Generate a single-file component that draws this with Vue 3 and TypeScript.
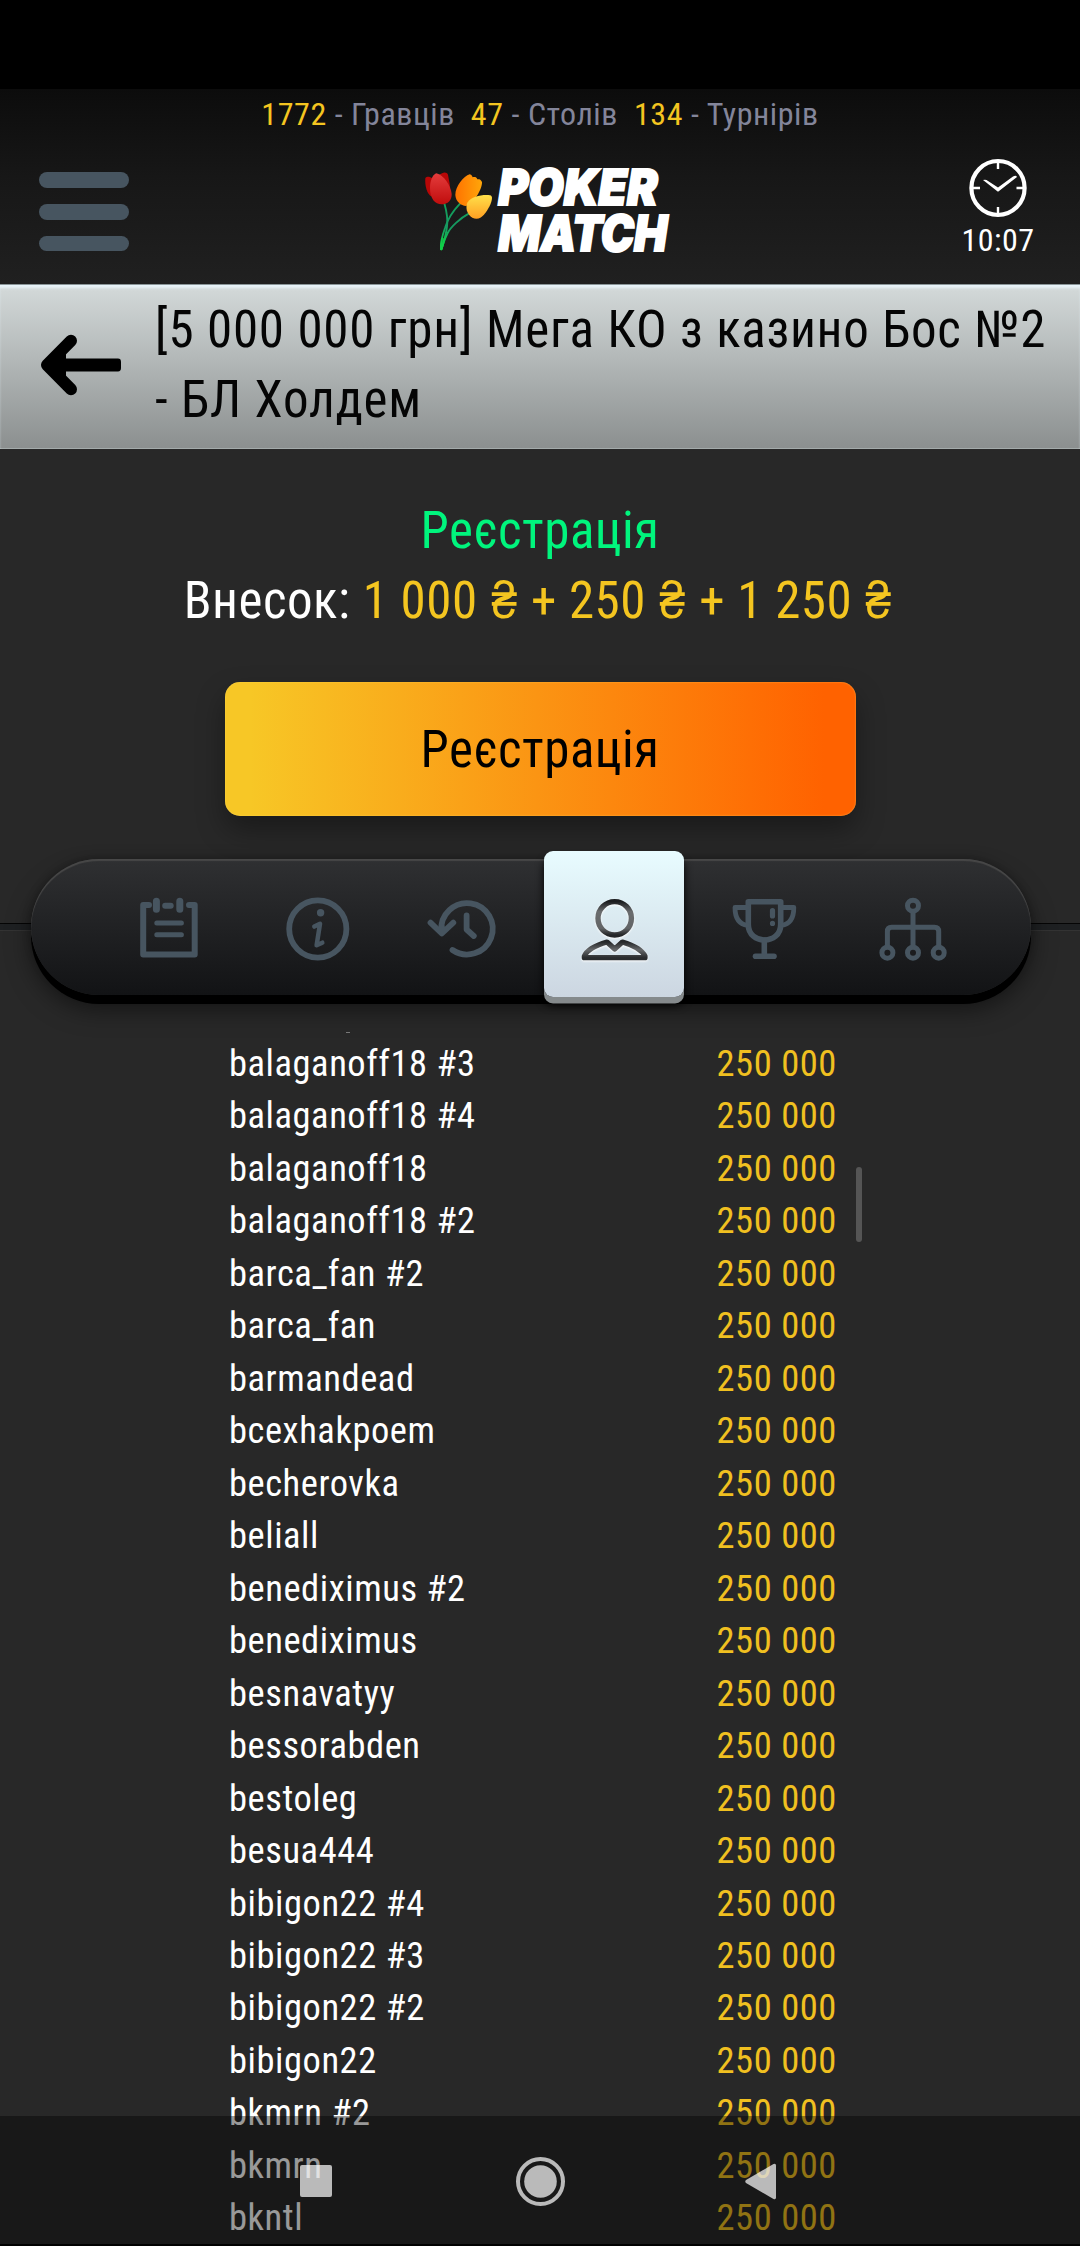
<script setup lang="ts">
interface Stat { value: string; label: string }
interface Player { name: string; chips: string }

const stats: Stat[] = [
  { value: '1772', label: 'Гравців' },
  { value: '47', label: 'Столів' },
  { value: '134', label: 'Турнірів' },
]

const names: string[] = [
  'balaganoff18 #3', 'balaganoff18 #4', 'balaganoff18', 'balaganoff18 #2',
  'barca_fan #2', 'barca_fan', 'barmandead', 'bcexhakpoem', 'becherovka',
  'beliall', 'benediximus #2', 'benediximus', 'besnavatyy', 'bessorabden',
  'bestoleg', 'besua444', 'bibigon22 #4', 'bibigon22 #3', 'bibigon22 #2',
  'bibigon22', 'bkmrn #2', 'bkmrn', 'bkntl',
]
const players: Player[] = names.map((name) => ({ name, chips: '250 000' }))
</script>

<template>
  <div class="screen">
    <div class="cutout"></div>

    <header class="header">
      <div class="stats">
        <span v-for="s in stats" :key="s.label" class="stat"><b>{{ s.value }}</b> - {{ s.label }}</span>
      </div>
      <div class="bar">
        <div class="burger"><i></i><i></i><i></i></div>
        <svg class="logo" width="290" height="120" viewBox="0 0 870 360">
          <defs>
            <linearGradient id="red" x1="0" y1="0" x2="0" y2="1"><stop offset="0" stop-color="#e43c3c" /><stop offset="1" stop-color="#c00d0d" /></linearGradient>
            <linearGradient id="orange" x1="0" y1="0" x2="1" y2="0"><stop offset="0" stop-color="#ff7300" /><stop offset="1" stop-color="#ffa60a" /></linearGradient>
            <linearGradient id="yellow" x1="0" y1="0" x2="0" y2="1"><stop offset="0" stop-color="#ffe04a" /><stop offset="1" stop-color="#ff9f22" /></linearGradient>
            <linearGradient id="stem" gradientUnits="userSpaceOnUse" x1="0" y1="160" x2="0" y2="302"><stop offset="0" stop-color="#12a05a" /><stop offset="0.5" stop-color="#169a62" /><stop offset="1" stop-color="#10e045" /></linearGradient>
          </defs>
          <g fill="none" stroke="url(#stem)" stroke-width="5.5" stroke-linecap="round">
            <path d="M133 160C141 188 144 210 141 230C138 256 131 276 125 297" />
            <path d="M180 161C156 186 142 210 135 234C125 262 121 280 123 298" />
            <path d="M206 191C180 205 152 231 143 249C133 268 129 284 124 298" />
          </g>
          <path d="M121 296C120 282 122 272 126 262L134 266C133 276 130 290 126 301Z" fill="#10cf48" opacity=".75" />
          <path d="M96 85C90 79 80 79 76 84C74 106 81 133 95 140ZM118 76C128 65 141 66 144 74C147 92 152 108 150 124Z" fill="#b80707" />
          <path d="M109 70C97 75 90 93 90 114C90 146 105 163 125 163C143 163 156 151 155 132C152 106 131 75 109 70Z" fill="url(#red)" />
          <path d="M209 73C191 79 166 108 166 135C167 155 183 167 198 168C221 160 247 118 246 96C242 86 234 87 232 88C230 79 220 81 218 82C216 76 212 74 209 73Z" fill="url(#orange)" />
          <path d="M270 136C247 133 214 140 203 157C195 171 200 193 217 203C231 211 244 204 253 193C264 179 276 158 276 144C276 140 274 137 270 136Z" fill="url(#yellow)" />
          <g class="wordmark">
            <text x="295" y="164" textLength="478" lengthAdjust="spacingAndGlyphs">POKER</text>
            <text x="295" y="302" textLength="507" lengthAdjust="spacingAndGlyphs">MATCH</text>
          </g>
        </svg>
        <div class="clock">
          <svg width="60" height="62" viewBox="0 0 60 62">
            <ellipse cx="30" cy="31" rx="26.6" ry="27" fill="none" stroke="#fff" stroke-width="4.2" />
            <path d="M30 5v7M30 50v7M4 31h8M48.500 31h8" stroke="#fff" stroke-width="2.400" />
            <path d="M15 23Q18 22 20 24L30 30.500L45 19.500Q48 18 49 20L31 34Q30 35 29 34Z" fill="#fff" />
          </svg>
          <span>10:07</span>
        </div>
      </div>
    </header>

    <div class="title">
      <svg width="84" height="64" viewBox="0 0 84 64">
        <path d="M32 7.800L8 32L32 56.200" fill="none" stroke="#000" stroke-width="12" stroke-linecap="round" stroke-linejoin="round" />
        <path d="M8 25.600H79Q82 25.600 82 29V35Q82 38.400 79 38.400H8ZM8 32L27 20V44Z" />
      </svg>
      <h1>[5 000 000 грн] Мега КО з казино Бос №2<br>- БЛ Холдем</h1>
    </div>

    <main>
      <div class="state">Реєстрація</div>
      <div class="fee">Внесок: <b>1 000 <i>₴</i> + 250 <i>₴</i> + 1 250 <i>₴</i></b></div>
      <button class="register">Реєстрація</button>

      <div class="tabline">
        <nav class="tabs">
          <div class="tab">
            <svg width="80" height="80" viewBox="0 0 80 80">
              <path d="M20 16H14.200V65.600H65.700V16H60" stroke-width="6" />
              <path d="M27.400 12.200v8M50.800 12.200v8" stroke-width="7" />
              <path d="M36.200 16.700h5.500" stroke-width="6" />
              <path d="M27.800 34h24.600M27.800 45.700h24.600" stroke-width="5" />
            </svg>
          </div>
          <div class="tab">
            <svg width="80" height="80" viewBox="0 0 80 80">
              <circle cx="39.800" cy="40" r="28.600" stroke-width="5.800" />
              <circle cx="42.600" cy="23.700" r="3.700" fill="#475560" stroke="none" />
              <path d="M36.300 37.600L42 34.800L38.600 56.300L44.300 53.700" stroke-width="4.500" />
            </svg>
          </div>
          <div class="tab">
            <svg width="80" height="80" viewBox="0 0 80 80">
              <path d="M14.400 42A25.700 25.700 0 1 1 25.500 61" stroke-width="5.800" />
              <path d="M3.500 33.700L14.800 44.500L26.300 33.700M14.800 38v5" stroke-width="5.800" />
              <path d="M39.600 26.500V40.500L46.800 47" stroke-width="5.800" />
            </svg>
          </div>
          <div class="tab">
            <div class="card">
              <svg width="80" height="80" viewBox="0 0 80 80">
                <defs>
                  <linearGradient id="head" x1="0" y1="0" x2="0" y2="1"><stop offset="0" stop-color="#1c1e20" /><stop offset=".3" stop-color="#6a6c6e" /><stop offset=".8" stop-color="#626466" /><stop offset="1" stop-color="#242628" /></linearGradient>
                  <linearGradient id="body" x1="0" y1="0" x2="0" y2="1"><stop offset="0" stop-color="#26282a" /><stop offset=".5" stop-color="#66686a" /><stop offset="1" stop-color="#2a2c2e" /></linearGradient>
                </defs>
                <circle cx="39.700" cy="29.300" r="16.700" stroke="url(#head)" stroke-width="5.400" />
                <path d="M9.300 67.200Q13 58.500 32 53L39.700 60L47.400 53Q66 58.500 70 67.200V68.700H9.300Z" stroke="url(#body)" stroke-width="5.200" />
              </svg>
            </div>
          </div>
          <div class="tab">
            <svg width="80" height="80" viewBox="0 0 80 80">
              <path d="M24.300 12.800H56.700V35.500C56.700 46 48.500 51 40.500 51S24.300 46 24.300 35.500Z" stroke-width="5.600" />
              <path d="M23 18.500H11C11 28.500 15 35.200 23.500 36.300M58 18.500H69.800C69.800 28.500 66 35.200 57.500 36.300" stroke-width="4.800" />
              <path d="M40.300 51V66" stroke-width="5.600" />
              <path d="M31.500 67.300H50" stroke-width="5.600" />
              <path d="M48.500 21.500V27M48.500 34.400V34.500" stroke-width="5.200" />
            </svg>
          </div>
          <div class="tab">
            <svg width="80" height="80" viewBox="0 0 80 80">
              <g stroke-width="5">
                <circle cx="40" cy="16.700" r="5.500" /><circle cx="14.400" cy="63.700" r="5.500" />
                <circle cx="40" cy="63.700" r="5.500" /><circle cx="65.700" cy="63.700" r="5.500" />
                <path stroke-linecap="butt" d="M40 22V58M14.400 58V42.500Q14.400 38.300 18.600 38.300H61.500Q65.700 38.300 65.700 42.500V58" />
              </g>
            </svg>
          </div>
        </nav>
      </div>

      <div class="list">
        <ul>
          <li v-for="p in players" :key="p.name"><span>{{ p.name }}</span><b>{{ p.chips }}</b></li>
        </ul>
        <i class="scrollbar"></i>
      </div>
    </main>

    <footer class="sysnav">
      <svg width="1080" height="130" viewBox="0 0 1080 130" fill="#fff" fill-opacity=".7">
        <rect x="300" y="49" width="32" height="32" rx="2" />
        <circle cx="540.500" cy="65.500" r="16.300" />
        <circle cx="540.500" cy="65.500" r="22.500" fill="none" stroke="#fff" stroke-opacity=".7" stroke-width="4" />
        <path d="M746 64L773.500 48Q776 47 776 49.500V81.500Q776 84 773.500 83L746 67Q744.500 65.500 746 64Z" />
      </svg>
    </footer>
  </div>
</template>

<style>
body { margin: 0; background: #282828; }
</style>

<style scoped>
* { box-sizing: border-box; }
b { font-weight: 400; }
.screen {
  position: relative;
  width: 1080px;
  height: 2246px;
  overflow: hidden;
  background: #282828;
  font-family: 'Roboto Condensed', Roboto, sans-serif;
  font-stretch: 75%;
  color: #fff;
  white-space: nowrap;
}
.cutout { height: 89px; background: #000; }
.header { height: 195px; background: linear-gradient(#0c0c0c, #171717 45%, #202020); }
.stats {
  display: flex;
  justify-content: center;
  gap: 16px;
  height: 50px;
  font-size: 32px;
  line-height: 51px;
  letter-spacing: .56px;
  color: #83859a;
}
.stats b { color: #f4c520; }
.bar { display: flex; justify-content: space-between; height: 145px; }
.burger { display: flex; flex-direction: column; gap: 16.500px; width: 129px; padding: 33.300px 0 0 39px; }
.burger i { height: 15.400px; border-radius: 8px; background: #475560; }
.logo { margin: 11px 0 0 271px; flex: none; }
.wordmark { font: italic 900 147px Inter, sans-serif; fill: #fff; stroke: #fff; stroke-width: 6px; }
.clock {
  display: flex;
  flex-direction: column;
  align-items: center;
  width: 164px;
  margin-left: auto;
  padding: 18px 0 0;
  font-size: 32px;
  line-height: 38px;
  letter-spacing: .5px;
}
.clock span { margin-top: 2px; }
.title {
  display: flex;
  height: 165px;
  padding-left: 39px;
  background: linear-gradient(#d4dada, #8b8f8f);
  box-shadow: inset 0 1px 0 #8b9699, inset 0 5px 3px -1px #e9f4fa, inset 0 -1px 0 #a4abab;
  color: #050505;
}
.title svg { margin-top: 49px; flex: none; }
.title h1 { margin: 11px 0 0 32px; font-size: 51px; font-weight: 400; line-height: 70px; letter-spacing: .7px; word-spacing: .3px; }
main { display: flex; flex-direction: column; align-items: center; }
.state, .fee { font-size: 51px; line-height: 70px; letter-spacing: .5px; }
.state { margin-top: 47px; color: #00f57d; }
.fee { margin-left: -3px; }
.fee b { color: #f4c520; }
.fee i { display: inline-block; font-style: normal; transform: scaleX(.9); }
.register {
  width: 631px;
  height: 134px;
  margin-top: 46px;
  padding: 0;
  border: 0;
  border-radius: 15px;
  background: linear-gradient(90deg, #f7c726 4%, #ff6200 95%);
  box-shadow: 0 14px 28px rgba(0, 0, 0, .35), inset 0 0 2px rgba(255, 220, 100, .6);
  font: inherit;
  font-size: 51px;
  letter-spacing: .5px;
  color: #000;
}
.tabline {
  width: 100%;
  margin-top: 43px;
  padding-left: 31px;
  background: linear-gradient(#0000 64px, #050505 64px 65px, #1e2022 65px 71px, #333 71px 72px, #0000 72px);
}
.tabs {
  display: flex;
  width: 1000px;
  height: 136px;
  padding-left: 64px;
  border-radius: 68px;
  background: linear-gradient(#2f3032, #121315);
  box-shadow: inset 0 2px 1px #484848, 0 9px 0 #000, 0 14px 24px rgba(0, 0, 0, .5), 0 0 10px rgba(0, 0, 0, .3);
}
.tab { flex: none; width: 148.700px; }
.tab svg { display: block; margin: 30px auto 0; fill: none; stroke: #475560; stroke-linecap: round; stroke-linejoin: round; }
.card {
  width: 140px;
  height: 146px;
  margin: -8px 0 0 2.500px;
  padding-top: 8px;
  border-radius: 9px;
  background: linear-gradient(#e8fcff, #ccd6e1);
  box-shadow: 0 6.500px 0 #858a8c, 0 8px 8px #000;
}
.tab .card svg { margin: 30px 0 0 31.500px; filter: drop-shadow(0 1px 1px #fff); }
.list { position: relative; align-self: flex-start; width: 640px; height: 1215px; margin-top: 36px; margin-left: 229px; overflow: hidden; font-size: 36.500px; line-height: 52.480px; letter-spacing: .55px; }
.list::before { content: ''; position: absolute; top: 1px; left: 117px; width: 4px; height: 1px; background: #777; }
ul { margin: 0; padding: 7px 0 0; list-style: none; }
li { display: flex; height: 52.480px; }
li span { width: 487.500px; }
li b { color: #f0c020; }
.scrollbar { position: absolute; top: 136px; left: 627px; width: 6px; height: 75px; border-radius: 3px; background: #555; }
.sysnav { position: absolute; left: 0; bottom: 0; width: 1080px; height: 130px; background: rgba(0, 0, 0, .4); border-bottom: 2px solid #000; }
</style>
